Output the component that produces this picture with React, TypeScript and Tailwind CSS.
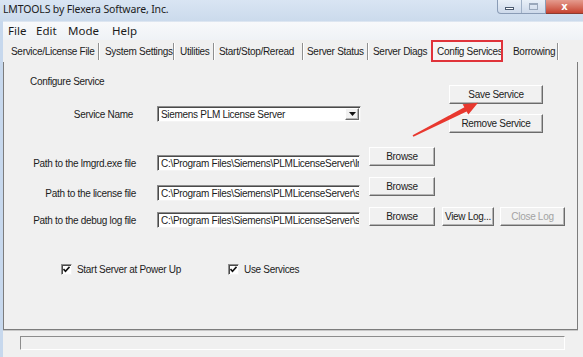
import React from 'react'

const dlg = "font-['Liberation_Sans',Arial,sans-serif] text-[10px] tracking-[-0.3px] text-[#1c1c1c]"
const raised =
    'flex items-center justify-center bg-[#f1f1f1] border border-t-white border-l-white border-r-[#6b6b6b] border-b-[#6b6b6b] shadow-[inset_-1px_-1px_0_#b4b4b4]'
const sunken =
    'bg-white border border-t-[#8d8d8d] border-l-[#8d8d8d] border-r-[#f4f4f4] border-b-[#f4f4f4] shadow-[inset_1px_1px_0_#4a4a4a]'

const tabs: { label: string; w: string; pl: string; divider: boolean; active?: boolean }[] = [
    { label: 'Service/License File', w: 'w-[95px]', pl: 'pl-[8px]', divider: true },
    { label: 'System Settings', w: 'w-[73px]', pl: 'pl-[5px]', divider: true },
    { label: 'Utilities', w: 'w-[38px]', pl: 'pl-[5px]', divider: true },
    { label: 'Start/Stop/Reread', w: 'w-[87px]', pl: 'pl-[4px]', divider: true },
    { label: 'Server Status', w: 'w-[63px]', pl: 'pl-[3px]', divider: true },
    { label: 'Server Diags', w: 'w-[62px]', pl: 'pl-[4px]', divider: false },
    { label: 'Config Services', w: 'w-[72px]', pl: 'pl-[4px]', divider: false, active: true },
    { label: 'Borrowing', w: 'w-[54px]', pl: 'pl-[10px]', divider: true },
]

export default function App() {
    return (
        <div className="relative w-[583px] h-[357px] overflow-hidden flex flex-col bg-[#f0f0f0]">
            {/* Title bar */}
            <div className="h-[21px] flex bg-gradient-to-b from-[#d9e5f3] to-[#cbdaec]">
                <span className="flex-1 pl-[3px] pt-[2px] font-['Noto_Sans',sans-serif] text-[10.5px] tracking-[-0.15px] text-[#1b1b1b]">
                    LMTOOLS by Flexera Software, Inc.
                </span>
                <div className="flex h-[14px] w-[49px] rounded-bl-[4px] border border-t-0 border-[#8a9cb6] bg-gradient-to-b from-[#e9f0f8] to-[#cdd9ea]">
                    <div className="flex-1 flex items-end justify-center pb-[3px] border-r border-[#9fb0c6]">
                        <div className="w-[9px] h-[3px] bg-white border border-[#4b5b70]" />
                    </div>
                    <div className="flex-1 flex items-center justify-center">
                        <div className="w-[9px] h-[7px] border border-[#9aa8bb] border-t-2" />
                    </div>
                </div>
                <div className="flex h-[14px] w-[37px] items-center justify-center border-b border-[#8b3b30] bg-gradient-to-b from-[#e49b8e] to-[#c5412f]">
                    <span className="font-['DejaVu_Sans',sans-serif] text-[10px] font-bold leading-none text-white">x</span>
                </div>
            </div>

            <div className="flex flex-1">
                {/* Left frame */}
                <div className="w-[3px] bg-[#c7d8ed]" />

                <div className="flex-1 flex flex-col">
                    {/* Menu */}
                    <div className="h-[19px] flex items-center pl-[5px] border-t border-[#dde6f1] bg-gradient-to-b from-[#f8f9fb] to-[#eff2f6] font-['Noto_Sans',sans-serif] text-[11.5px] text-[#1b1b1b]">
                        <span className="w-[28px]">File</span>
                        <span className="w-[32px]">Edit</span>
                        <span className="w-[44px]">Mode</span>
                        <span>Help</span>
                    </div>

                    {/* Tabs */}
                    <div className={`h-[22px] flex items-stretch ${dlg}`}>
                        {tabs.map((t) => (
                            <div key={t.label} className="flex items-center">
                                <div
                                    className={`${t.w} ${t.pl} h-full flex items-center whitespace-nowrap overflow-hidden ${
                                        t.active ? 'border-2 border-[#e0333a] bg-[#f5f5f5]' : ''
                                    }`}
                                >
                                    {t.label}
                                </div>
                                {t.divider && <div className="w-[1px] h-[17px] bg-[#8f8f8f] shadow-[1px_0_0_#ffffff] mr-[1px]" />}
                            </div>
                        ))}
                    </div>

                    {/* Tab page */}
                    <div className={`relative w-[575px] h-[268px] flex flex-col border-l border-r border-b border-[#7c7c7c] shadow-[0_1px_0_#c8c8c8] ${dlg}`}>
                        <div className="ml-[26px] mt-[14px] h-[12px] leading-[12px]">Configure Service</div>

                        <div className="flex -mt-[26px]">
                            <div className="w-[357px] pt-[44px]">
                                <div className="flex items-center">
                                    <div className="w-[153px] pr-[24px] text-right">Service Name</div>
                                    <div className={`w-[204px] h-[16px] flex items-center ${sunken}`}>
                                        <span className="flex-1 pl-[3px] whitespace-nowrap">Siemens PLM License Server</span>
                                        <div className={`w-[14px] h-[12px] mr-[1px] ${raised}`}>
                                            <svg width="7" height="4" viewBox="0 0 7 4">
                                                <path d="M0 0h7L3.5 4z" fill="#111" />
                                            </svg>
                                        </div>
                                    </div>
                                </div>
                            </div>
                            <div className="ml-[88px] pt-[23px] flex flex-col gap-[10px]">
                                <div className={`w-[94px] h-[19px] ${raised}`}>Save Service</div>
                                <div className={`w-[94px] h-[19px] ${raised}`}>Remove Service</div>
                            </div>
                        </div>

                        {/* Paths */}
                        <div className="mt-[14px] flex flex-col">
                            <PathRow label="Path to the lmgrd.exe file" value="C:\Program Files\Siemens\PLMLicenseServer\lmgrd" offset="mt-[8px]" />
                            <PathRow label="Path to the license file" value="C:\Program Files\Siemens\PLMLicenseServer\splm" offset="mt-[8px]" />
                            <PathRow label="Path to the debug log file" value="C:\Program Files\Siemens\PLMLicenseServer\splm" offset="mt-[5px]">
                                <div className={`ml-[7px] w-[52px] h-[19px] ${raised}`}>View Log...</div>
                                <div className={`ml-[6px] w-[65px] h-[19px] ${raised} text-[#a3a3a3]`}>Close Log</div>
                            </PathRow>
                        </div>

                        {/* Options */}
                        <div className="mt-[25px] ml-[57px] flex items-center">
                            <div className="w-[167px] flex items-center">
                                <CheckBox />
                                <span className="ml-[5px]">Start Server at Power Up</span>
                            </div>
                            <div className="flex items-center">
                                <CheckBox />
                                <span className="ml-[5px]">Use Services</span>
                            </div>
                        </div>
                    </div>

                    {/* Status bar */}
                    <div className="flex-1 pt-[6px] pl-[17px]">
                        <div className="w-[545px] h-[14px] border border-t-[#8d8d8d] border-l-[#8d8d8d] border-r-white border-b-white" />
                    </div>
                </div>
            </div>

            {/* Annotation arrow */}
            <svg className="absolute left-0 top-0 pointer-events-none" width="583" height="357" viewBox="0 0 583 357">
                <polygon
                    points="412.6,135.2 464.4,107.3 462.6,104.2 478,102.8 468.4,114.6 466.6,111.4 413.4,136.8"
                    fill="#e8382f"
                />
            </svg>
        </div>
    )
}

function PathRow({
    label,
    value,
    offset,
    children,
}: {
    label: string
    value: string
    offset: string
    children?: React.ReactNode
}) {
    return (
        <div className="h-[30px] flex items-start">
            <div className={`flex items-center ${offset}`}>
                <div className="w-[153px] pr-[21px] text-right">{label}</div>
                <div className={`w-[203px] h-[16px] flex items-center overflow-hidden ${sunken}`}>
                    <span className="pl-[3px] whitespace-nowrap overflow-hidden">{value}</span>
                </div>
            </div>
            <div className={`ml-[9px] w-[66px] h-[19px] ${raised}`}>Browse</div>
            {children}
        </div>
    )
}

function CheckBox() {
    return (
        <div className={`w-[11px] h-[11px] flex items-center justify-center ${sunken}`}>
            <svg width="7" height="7" viewBox="0 0 7 7">
                <path d="M0.5 3l2 2.2L6.5 0.8" stroke="#111" strokeWidth="1.6" fill="none" />
            </svg>
        </div>
    )
}
